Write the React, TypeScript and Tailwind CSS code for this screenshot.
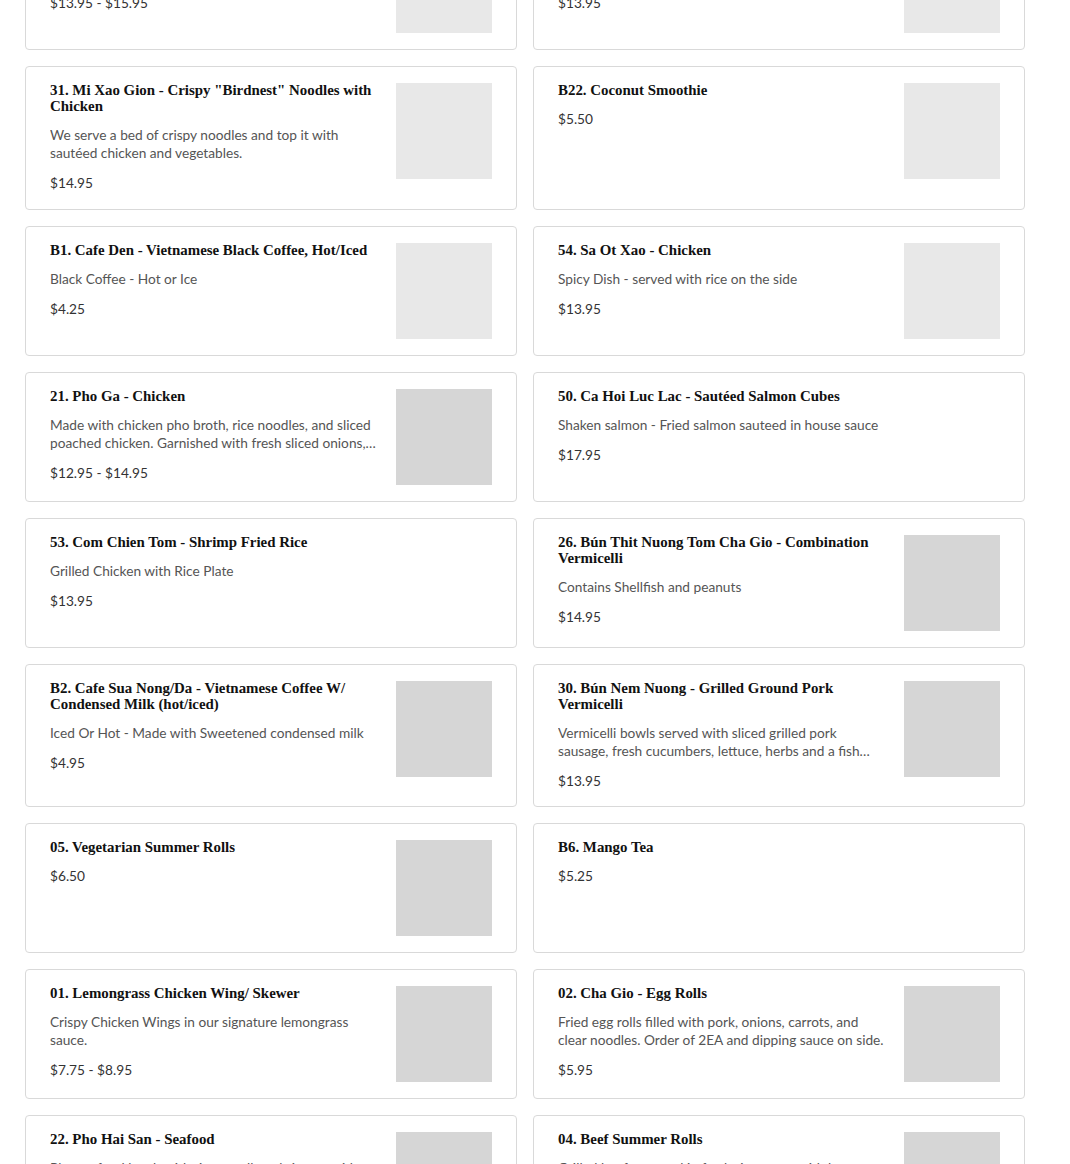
import React, { FC } from 'react';

interface MenuItem {
  name: string;
  description?: string;
  price: string;
  image?: 'light' | 'dark';
}

const items: MenuItem[] = [
  {
    name: '20. Pho Tai - Rare Steak',
    description: 'Beef pho broth with rice noodles and rare steak',
    price: '$13.95 - $15.95',
    image: 'light',
  },
  {
    name: '27. Bún Thit Nuong - Grilled Pork Vermicelli',
    description: 'Vermicelli bowl with grilled pork',
    price: '$13.95',
    image: 'light',
  },
  {
    name: '31. Mi Xao Gion - Crispy "Birdnest" Noodles with Chicken',
    description:
      'We serve a bed of crispy noodles and top it with sautéed chicken and vegetables.',
    price: '$14.95',
    image: 'light',
  },
  { name: 'B22. Coconut Smoothie', price: '$5.50', image: 'light' },
  {
    name: 'B1. Cafe Den - Vietnamese Black Coffee, Hot/Iced',
    description: 'Black Coffee - Hot or Ice',
    price: '$4.25',
    image: 'light',
  },
  {
    name: '54. Sa Ot Xao - Chicken',
    description: 'Spicy Dish - served with rice on the side',
    price: '$13.95',
    image: 'light',
  },
  {
    name: '21. Pho Ga - Chicken',
    description:
      'Made with chicken pho broth, rice noodles, and sliced poached chicken. Garnished with fresh sliced onions, cilantro and scallions.',
    price: '$12.95 - $14.95',
    image: 'dark',
  },
  {
    name: '50. Ca Hoi Luc Lac - Sautéed Salmon Cubes',
    description: 'Shaken salmon - Fried salmon sauteed in house sauce',
    price: '$17.95',
  },
  {
    name: '53. Com Chien Tom - Shrimp Fried Rice',
    description: 'Grilled Chicken with Rice Plate',
    price: '$13.95',
  },
  {
    name: '26. Bún Thit Nuong Tom Cha Gio - Combination Vermicelli',
    description: 'Contains Shellfish and peanuts',
    price: '$14.95',
    image: 'dark',
  },
  {
    name: 'B2. Cafe Sua Nong/Da - Vietnamese Coffee W/ Condensed Milk (hot/iced)',
    description: 'Iced Or Hot - Made with Sweetened condensed milk',
    price: '$4.95',
    image: 'dark',
  },
  {
    name: '30. Bún Nem Nuong - Grilled Ground Pork Vermicelli',
    description:
      'Vermicelli bowls served with sliced grilled pork sausage, fresh cucumbers, lettuce, herbs and a fish sauce dressing.',
    price: '$13.95',
    image: 'dark',
  },
  { name: '05. Vegetarian Summer Rolls', price: '$6.50', image: 'dark' },
  { name: 'B6. Mango Tea', price: '$5.25' },
  {
    name: '01. Lemongrass Chicken Wing/ Skewer',
    description: 'Crispy Chicken Wings in our signature lemongrass sauce.',
    price: '$7.75 - $8.95',
    image: 'dark',
  },
  {
    name: '02. Cha Gio - Egg Rolls',
    description:
      'Fried egg rolls filled with pork, onions, carrots, and clear noodles. Order of 2EA and dipping sauce on side.',
    price: '$5.95',
    image: 'dark',
  },
  {
    name: '22. Pho Hai San - Seafood',
    description:
      'Pho seafood broth with rice noodles, shrimp, squid, fish balls and imitation crab. Garnished with onions and cilantro.',
    price: '$15.95',
    image: 'dark',
  },
  {
    name: '04. Beef Summer Rolls',
    description: 'Grilled beef wrapped in fresh rice paper with lettuce, herbs and vermicelli.',
    price: '$6.95',
    image: 'dark',
  },
];

const MenuCard: FC<{ item: MenuItem }> = ({ item }) => (
  <div className="flex gap-4 rounded border border-[#d9d9d9] bg-white px-6 pb-4 pt-[15px]">
    <div className="min-w-0 flex-1">
      <h3 className="font-['Liberation_Serif',serif] text-[14.9px] font-bold leading-[16px] text-[#111]">
        {item.name}
      </h3>
      {item.description && (
        <p className="mt-3 line-clamp-2 font-['Lato',sans-serif] text-[13.7px] leading-[18px] text-[#555]">
          {item.description}
        </p>
      )}
      <div className="mt-3 font-['Lato',sans-serif] text-[13.7px] leading-[18.5px] text-[#333]">
        {item.price}
      </div>
    </div>
    {item.image && (
      <div
        className={
          item.image === 'light'
            ? 'mt-px h-24 w-24 shrink-0 bg-[#e8e8e8]'
            : 'mt-px h-24 w-24 shrink-0 bg-[#d6d6d6]'
        }
      />
    )}
  </div>
);

const App: FC = () => {
  return (
    <div className="min-h-screen overflow-hidden bg-white">
      <div className="ml-[25px] mt-[-80px] grid w-[1000px] grid-cols-2 gap-4">
        {items.map((item) => (
          <MenuCard key={item.name} item={item} />
        ))}
      </div>
    </div>
  );
};

export default App;
